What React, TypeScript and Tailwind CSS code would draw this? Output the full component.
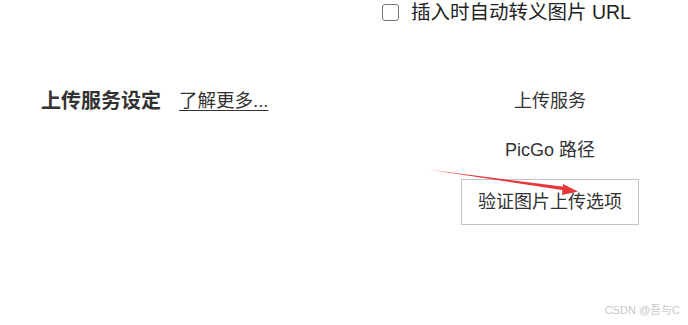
import React from 'react';

const font = { fontFamily: '"Liberation Sans", "Noto Sans CJK SC", sans-serif' };

export default function App() {
  return (
    <div className="relative w-[688px] h-[325px] bg-white text-[#333] overflow-hidden" style={font}>
      {/* 顶部复选框 */}
      <div className="flex items-center pl-[382px] pt-[2px] h-[22px]">
        <span className="w-[17px] h-[17px] shrink-0 border-[1.5px] border-[#767676] rounded-[3px] bg-white" />
        <span className="ml-[12px] text-[19.5px] leading-[22px] text-[#222]">插入时自动转义图片 URL</span>
      </div>

      {/* 上传服务设定 */}
      <div className="flex mt-[66px]">
        <div className="flex items-center pl-[41px] w-[450px] h-[26px]">
          <span className="text-[20px] font-bold leading-[26px] text-[#333]">上传服务设定</span>
          <a className="ml-[18px] text-[18.5px] leading-[26px] underline underline-offset-[3px] text-[#333]">了解更多...</a>
        </div>
        <div className="flex flex-col items-center w-[200px]">
          <div className="h-[26px] text-[18px] leading-[26px]">上传服务</div>
          <div className="mt-[23px] h-[26px] text-[18px] leading-[26px]">PicGo 路径</div>
          <button className="mt-[16px] h-[46px] px-[16px] border border-[#c4c4c4] bg-white text-[18px] leading-[26px] text-[#333]">
            验证图片上传选项
          </button>
        </div>
      </div>

      {/* 红色箭头标注 */}
      <svg className="absolute left-0 top-0 pointer-events-none" width="688" height="325">
        <polygon points="428,169.5 566,187 565,190.5" fill="#e8383b" />
        <polygon points="578,191.5 563,184 562,195" fill="#e8383b" />
      </svg>

      <div className="absolute right-[8px] bottom-[7px] text-[11px] text-[#c8c8c8]">CSDN @吾与C</div>
    </div>
  );
}
